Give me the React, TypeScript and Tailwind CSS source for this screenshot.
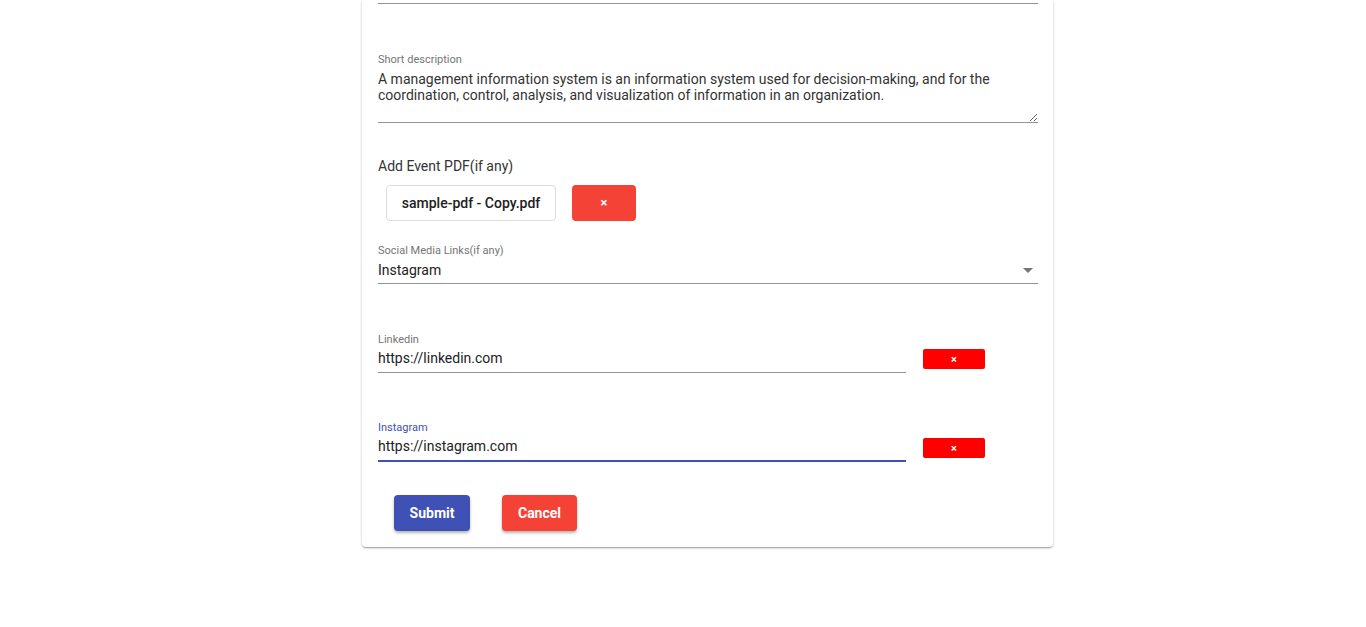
import React from "react"

const labelBase = "block text-[11px] leading-[13px]"

function LinkRow({ label, value, focused = false }: { label: string; value: string; focused?: boolean }) {
  return (
    <div className="flex items-end">
      <div className="w-[528px]">
        <span className={`${labelBase} ${focused ? "text-[#3f51b5]" : "text-[#757575]"}`}>{label}</span>
        <div
          className={`mt-[4px] pb-[6px] text-[14px] leading-[16px] text-[#212121] ${
            focused ? "border-b-2 border-[#3f51b5]" : "border-b border-[#949494]"
          }`}
        >
          {value}
        </div>
      </div>
      <button className="ml-[17px] mb-[4px] w-[62px] h-[20px] rounded-[2px] bg-[#ff0000] text-white text-[11px] font-bold leading-none flex items-center justify-center">
        ×
      </button>
    </div>
  )
}

export default function App() {
  return (
    <div className="min-h-[627px] bg-white" style={{ fontFamily: "Roboto, 'Liberation Sans', sans-serif" }}>
      <div className="ml-[362px] w-[691px] bg-white rounded-b-[4px] shadow-[0_1px_3px_rgba(0,0,0,0.2),0_1px_1px_rgba(0,0,0,0.14),0_2px_1px_-1px_rgba(0,0,0,0.12)] pl-[16px] pr-[15px] pb-[16px]">
        <div className="h-[4px] border-b border-[#949494]" />

        <div className="pt-[49px]">
          <span className={`${labelBase} text-[#757575]`}>Short description</span>
          <textarea
            readOnly
            className="block mt-[5px] w-full h-[52px] p-0 text-[14px] leading-[16px] text-[#333] border-b border-[#949494] outline-none"
            style={{ fontFamily: "Roboto, 'Liberation Sans', sans-serif" }}
            value="A management information system is an information system used for decision-making, and for the coordination, control, analysis, and visualization of information in an organization."
          />
        </div>

        <div className="mt-[35px] text-[14px] leading-[16px] text-[#333]">Add Event PDF(if any)</div>
        <div className="mt-[11px] flex ml-[8px]">
          <div className="w-[170px] h-[36px] border border-[#dedede] rounded-[4px] flex items-center justify-center text-[14px] font-medium text-[#212121]">
            sample-pdf - Copy.pdf
          </div>
          <button className="ml-[16px] w-[64px] h-[36px] rounded-[4px] bg-[#f44336] text-white text-[13px] font-bold flex items-center justify-center">
            ×
          </button>
        </div>

        <div className="mt-[23px]">
          <span className={`${labelBase} text-[#757575]`}>Social Media Links(if any)</span>
          <div className="mt-[5px] flex items-center justify-between border-b border-[#949494] pb-[5px] text-[14px] leading-[16px] text-[#212121]">
            <span>Instagram</span>
            <svg width="10" height="5" viewBox="0 0 10 5" className="mr-[5px]">
              <path d="M0 0 L10 0 L5 5 Z" fill="#757575" />
            </svg>
          </div>
        </div>

        <div className="mt-[49px]">
          <LinkRow label="Linkedin" value="https://linkedin.com" />
        </div>
        <div className="mt-[48px]">
          <LinkRow label="Instagram" value="https://instagram.com" focused />
        </div>

        <div className="mt-[33px] ml-[16px] flex gap-[32px]">
          <button className="w-[76px] h-[36px] rounded-[4px] bg-[#3f51b5] text-white text-[14px] font-bold shadow-[0_2px_3px_rgba(0,0,0,0.3)]">
            Submit
          </button>
          <button className="w-[75px] h-[36px] rounded-[4px] bg-[#f44336] text-white text-[14px] font-bold shadow-[0_2px_3px_rgba(0,0,0,0.3)]">
            Cancel
          </button>
        </div>
      </div>
    </div>
  )
}
